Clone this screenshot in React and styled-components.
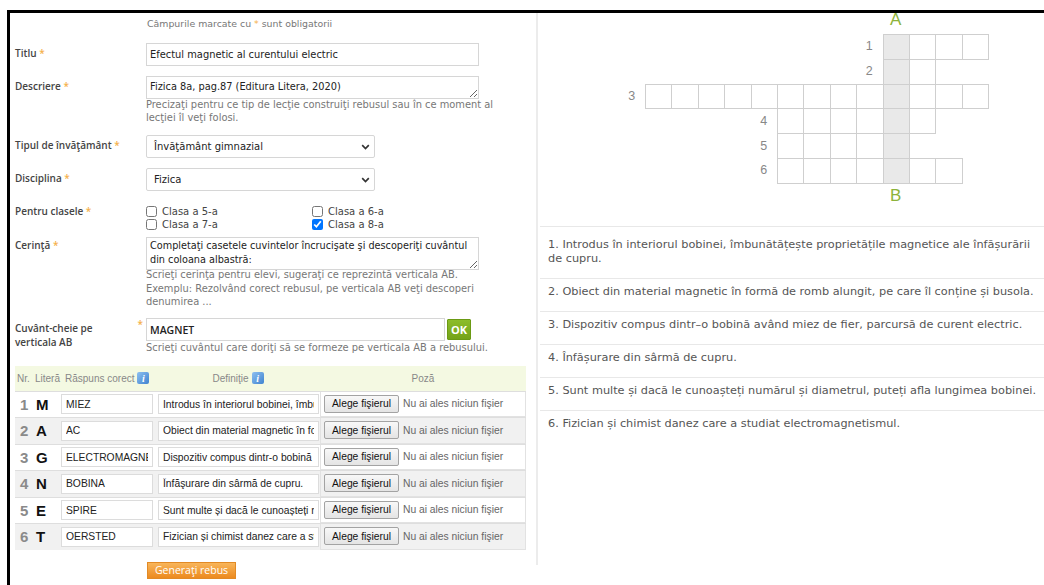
import React from 'react';
import styled, {createGlobalStyle} from 'styled-components';

const GlobalStyle = createGlobalStyle`
  html, body {
    margin: 0;
    padding: 0;
    background: #fff;
  }
  body {
    font-family: "DejaVu Sans", "Open Sans", sans-serif;
    color: #444;
  }
`;

const Frame = styled.div`
  display: flex;
  margin: 10px 0 0 7px;
  height: 575px;
  box-sizing: border-box;
  border-top: 3px solid #000;
  border-left: 3px solid #000;
`;

/* ---------- left: the form ---------- */

const FormPanel = styled.div`
  flex: none;
  width: 526px;
  box-sizing: border-box;
  padding: 3.5px 10px 0 5px;
`;

const Note = styled.div`
  margin-left: 132px;
  font-size: 9.4px;
  line-height: 13px;
  color: #777;
`;

const Star = styled.span`
  color: #f5b04a;
`;

const FieldRow = styled.div`
  display: grid;
  grid-template-columns: 131px 1fr;
  margin-top: ${({$gap}) => $gap}px;
`;

const Label = styled.div`
  padding-top: ${({$pad}) => ($pad === undefined ? 3.5 : $pad)}px;
  font-family: "Open Sans", sans-serif;
  font-size: 10px;
  line-height: 13px;
  font-weight: 600;
  color: #444;
  white-space: nowrap;
`;

const SplitLabel = styled(Label)`
  display: flex;
  justify-content: space-between;
  align-items: flex-start;
  padding-right: 3px;
  line-height: 14px;
  white-space: normal;

  ${Star} {
    margin-top: -4px;
  }
`;

const Field = styled.div`
  display: flex;
  flex-direction: column;
  align-items: flex-start;
`;

const TextInput = styled.input`
  width: ${({$w}) => $w || 333}px;
  height: 23px;
  box-sizing: border-box;
  margin: 0;
  padding: 0 3px;
  border: 1px solid #d6d6d6;
  font-family: ${({$bold}) => ($bold ? '"Open Sans", sans-serif' : 'inherit')};
  font-size: ${({$bold}) => ($bold ? 10.5 : 9.9)}px;
  font-weight: ${({$bold}) => ($bold ? 600 : 400)};
  color: #222;
  outline: none;
`;

const TextArea = styled.textarea`
  display: block;
  width: 333px;
  height: ${({$h}) => $h}px;
  box-sizing: border-box;
  margin: 0;
  padding: ${({$pt}) => $pt}px 4px 0 3px;
  border: 1px solid #d6d6d6;
  font-family: inherit;
  font-size: ${({$size}) => $size || 9.8}px;
  line-height: 14px;
  color: #222;
  overflow: hidden;
  resize: vertical;
  outline: none;
`;

const Help = styled.div`
  margin-top: ${({$mt}) => $mt || 0}px;
  font-size: 9.9px;
  line-height: ${({$lh}) => $lh || 13}px;
  color: #777;
  white-space: nowrap;
`;

const SelectBox = styled.div`
  display: flex;
  align-items: center;
  justify-content: space-between;
  width: 229px;
  height: 23px;
  box-sizing: border-box;
  padding: 0 4px 0 7px;
  border: 1px solid #d6d6d6;
  border-radius: 2px;
  font-size: 10px;
  color: #222;
`;

const Checks = styled.div`
  display: grid;
  grid-template-columns: 166px 166px;
`;

const CheckItem = styled.label`
  display: flex;
  align-items: center;
  gap: 5px;
  font-size: 10px;
  line-height: 13px;
  color: #444;

  input {
    width: 11px;
    height: 11px;
    margin: 0;
  }
`;

const KeyLine = styled.div`
  display: flex;
  align-items: center;
  gap: 2px;
`;

const OkButton = styled.button`
  width: 24px;
  height: 21px;
  padding: 0;
  border: 1px solid #6b9a14;
  border-radius: 1px;
  background: linear-gradient(#8cbd2a, #74a318);
  color: #fff;
  font-family: "Open Sans", sans-serif;
  font-size: 11px;
  font-weight: 700;
`;

/* ---------- table of answers ---------- */

const Table = styled.div`
  margin-top: 11.5px;
  font-family: "Liberation Sans", Arial, sans-serif;
`;

const cols = '18px 25px 98px 164px 1fr';

const HeadRow = styled.div`
  display: grid;
  grid-template-columns: ${cols};
  align-items: center;
  height: 25px;
  background: #f4f9e2;
  font-size: 10px;
  color: #888;
  white-space: nowrap;
`;

const HeadCell = styled.div`
  display: flex;
  align-items: center;
  gap: 3px;
  justify-content: ${({$center}) => ($center ? 'center' : 'flex-start')};
  padding-left: ${({$pl}) => $pl || 0}px;
`;

const InfoIcon = styled.span`
  display: inline-flex;
  align-items: center;
  justify-content: center;
  width: 12px;
  height: 12px;
  border-radius: 2px;
  background: linear-gradient(135deg, #8ec0f0, #3f83d0);
  color: #fff;
  font-family: "Liberation Serif", serif;
  font-style: italic;
  font-weight: 700;
  font-size: 10px;
`;

const Row = styled.div`
  display: grid;
  grid-template-columns: ${cols};
  align-items: center;
  height: 26.5px;
  box-sizing: border-box;
  border-top: 1px solid #dedede;
  background: ${({$shade}) => ($shade ? '#f1f1f1' : '#fff')};
`;

const Num = styled.div`
  padding-left: 5px;
  font-size: 15px;
  font-weight: 700;
  color: #8a8a8a;
`;

const Letter = styled.div`
  padding-left: 3px;
  font-size: 15px;
  font-weight: 700;
  color: #111;
`;

const CellInput = styled.input`
  width: ${({$w}) => $w}px;
  height: 20px;
  box-sizing: border-box;
  margin: 0 0 0 ${({$ml}) => $ml}px;
  padding: 0 4px;
  border: 1px solid #dcdcdc;
  background: #fff;
  font-family: inherit;
  font-size: 10.3px;
  color: #222;
  outline: none;
`;

const FileCell = styled.div`
  display: flex;
  align-items: center;
  gap: 4px;
  height: 100%;
  box-sizing: border-box;
  padding: 0 3px;
  border: 1px solid #e2e2e2;
  border-top: none;
  font-size: 10.3px;
  color: #666;
  white-space: nowrap;
`;

const FileButton = styled.button`
  height: 18px;
  padding: 0 7px;
  border: 1px solid #a3a3a3;
  border-radius: 2px;
  background: linear-gradient(#f8f8f8, #e4e4e4);
  font-family: inherit;
  font-size: 10.3px;
  color: #111;
`;

const SubmitButton = styled.button`
  display: block;
  margin: 12px 0 0 132px;
  width: 89px;
  height: 17px;
  padding: 0;
  border: 1px solid #e28a25;
  background: linear-gradient(#f8b55a, #ec8a1f);
  color: #fff;
  font-family: "Open Sans", sans-serif;
  font-size: 10.5px;
`;

/* ---------- right: puzzle and clues ---------- */

const PuzzlePanel = styled.div`
  flex: 1;
  align-self: flex-start;
  height: 552px;
  border-left: 2px solid #ececec;
`;

const Grid = styled.div`
  display: grid;
  grid-template-columns: repeat(14, 26.4px);
  grid-template-rows: 21px repeat(6, 24.8px) 22px;
  margin-left: 80.6px;
  font-family: "Liberation Sans", Arial, sans-serif;
`;

const Box = styled.div`
  grid-row: ${({$row}) => $row};
  grid-column: ${({$col}) => $col};
  margin: 0 -1px -1px 0;
  border: 1px solid #cfcfcf;
  background: ${({$key}) => ($key ? '#e9e9e9' : '#fff')};
`;

const RowNum = styled.div`
  grid-row: ${({$row}) => $row};
  grid-column: ${({$col}) => $col};
  display: flex;
  align-items: center;
  justify-content: center;
  font-size: 12.5px;
  color: #888;
`;

const KeyMark = styled.div`
  grid-row: ${({$row}) => $row};
  grid-column: ${({$col}) => $col};
  text-align: center;
  font-size: 17px;
  line-height: 17px;
  margin-top: ${({$top}) => $top}px;
  color: #8db33a;
`;

const Clues = styled.ol`
  list-style: none;
  margin: 21px 0 0 2px;
  padding: 5px 0 0;
  border-top: 1px solid #e8e8e8;
`;

const Clue = styled.li`
  padding: 6px 0 12px 8px;
  border-bottom: 1px solid #e8e8e8;
  font-size: 11.3px;
  line-height: 14px;
  color: #555;

  &:last-child {
    border-bottom: none;
  }
`;

const Chevron = () => (
  <svg width="9" height="6" viewBox="0 0 9 6">
    <path d="M1.2 1.2 4.5 4.5 7.8 1.2" fill="none" stroke="#333" strokeWidth="1.7" />
  </svg>
);

const answers = [
  {letter: 'M', word: 'MIEZ', def: 'Introdus în interiorul bobinei, îmbunătăţeşte proprietăţile magnetice ale înfăşurării de cupru.'},
  {letter: 'A', word: 'AC', def: 'Obiect din material magnetic în formă de romb alungit, pe care îl conține și busola.'},
  {letter: 'G', word: 'ELECTROMAGNET', def: 'Dispozitiv compus dintr-o bobină având miez de fier, parcursă de curent electric.'},
  {letter: 'N', word: 'BOBINA', def: 'Înfăşurare din sârmă de cupru.'},
  {letter: 'E', word: 'SPIRE', def: 'Sunt multe și dacă le cunoașteți numărul și diametrul, puteți afla lungimea bobinei.'},
  {letter: 'T', word: 'OERSTED', def: 'Fizician și chimist danez care a studiat electromagnetismul.'},
];

const clues = [
  'Introdus în interiorul bobinei, îmbunătățește proprietățile magnetice ale înfășurării de cupru.',
  'Obiect din material magnetic în formă de romb alungit, pe care îl conține și busola.',
  'Dispozitiv compus dintr–o bobină având miez de fier, parcursă de curent electric.',
  'Înfășurare din sârmă de cupru.',
  'Sunt multe și dacă le cunoașteți numărul și diametrul, puteți afla lungimea bobinei.',
  'Fizician și chimist danez care a studiat electromagnetismul.',
];

// start column of each word, counted from the left of the longest row
const layout = [
  {start: 9, len: 4},
  {start: 9, len: 2},
  {start: 0, len: 13},
  {start: 5, len: 6},
  {start: 5, len: 5},
  {start: 5, len: 7},
];
const KEY_COL = 9;

const Puzzle = () => (
  <Grid>
    <KeyMark $row={1} $col={KEY_COL + 2} $top={-2}>A</KeyMark>
    {layout.map((w, i) => (
      <React.Fragment key={i}>
        <RowNum $row={i + 2} $col={w.start + 1}>{i + 1}</RowNum>
        {Array.from({length: w.len}, (_, k) => {
          const c = w.start + k;
          return <Box key={k} $row={i + 2} $col={c + 2} $key={c === KEY_COL} />;
        })}
      </React.Fragment>
    ))}
    <KeyMark $row={8} $col={KEY_COL + 2} $top={4}>B</KeyMark>
  </Grid>
);

export default function App() {
  return (
    <>
      <GlobalStyle />
      <Frame>
        <FormPanel>
          <Note>Câmpurile marcate cu <Star>*</Star> sunt obligatorii</Note>

          <FieldRow $gap={13.5}>
            <Label>Titlu <Star>*</Star></Label>
            <Field>
              <TextInput readOnly value="Efectul magnetic al curentului electric" />
            </Field>
          </FieldRow>

          <FieldRow $gap={10}>
            <Label>Descriere <Star>*</Star></Label>
            <Field>
              <TextArea readOnly $h={23} $pt={3} value="Fizica 8a, pag.87 (Editura Litera, 2020)" />
              <Help $mt={-1}>
                Precizaţi pentru ce tip de lecţie construiţi rebusul sau în ce moment al<br />
                lecţiei îl veţi folosi.
              </Help>
            </Field>
          </FieldRow>

          <FieldRow $gap={11}>
            <Label>Tipul de învăţământ <Star>*</Star></Label>
            <Field>
              <SelectBox>Învăţământ gimnazial<Chevron /></SelectBox>
            </Field>
          </FieldRow>

          <FieldRow $gap={10}>
            <Label>Disciplina <Star>*</Star></Label>
            <Field>
              <SelectBox>Fizica<Chevron /></SelectBox>
            </Field>
          </FieldRow>

          <FieldRow $gap={13.5}>
            <Label $pad={0}>Pentru clasele <Star>*</Star></Label>
            <Checks>
              <CheckItem><input type="checkbox" readOnly />Clasa a 5-a</CheckItem>
              <CheckItem><input type="checkbox" readOnly />Clasa a 6-a</CheckItem>
              <CheckItem><input type="checkbox" readOnly />Clasa a 7-a</CheckItem>
              <CheckItem><input type="checkbox" readOnly checked />Clasa a 8-a</CheckItem>
            </Checks>
          </FieldRow>

          <FieldRow $gap={6.5}>
            <Label $pad={2}>Cerinţă <Star>*</Star></Label>
            <Field>
              <TextArea
                readOnly
                $h={33}
                $pt={1}
                $size={9.7}
                value="Completaţi casetele cuvintelor încrucişate şi descoperiţi cuvântul din coloana albastră:"
              />
              <Help $mt={-2} $lh={13.5}>
                Scrieţi cerinţa pentru elevi, sugeraţi ce reprezintă verticala AB.<br />
                Exemplu: Rezolvând corect rebusul, pe verticala AB veţi descoperi<br />
                denumirea ...
              </Help>
            </Field>
          </FieldRow>

          <FieldRow $gap={9.5}>
            <SplitLabel $pad={3}>
              <span>Cuvânt-cheie pe<br />verticala AB</span>
              <Star>*</Star>
            </SplitLabel>
            <Field>
              <KeyLine>
                <TextInput readOnly $w={299} $bold value="MAGNET" />
                <OkButton>OK</OkButton>
              </KeyLine>
              <Help>Scrieţi cuvântul care doriţi să se formeze pe verticala AB a rebusului.</Help>
            </Field>
          </FieldRow>

          <Table>
            <HeadRow>
              <HeadCell $pl={2}>Nr.</HeadCell>
              <HeadCell $pl={2}>Literă</HeadCell>
              <HeadCell $pl={7}>Răspuns corect <InfoIcon>i</InfoIcon></HeadCell>
              <HeadCell $center>Definiţie <InfoIcon>i</InfoIcon></HeadCell>
              <HeadCell $center>Poză</HeadCell>
            </HeadRow>
            {answers.map((a, i) => (
              <Row key={a.word} $shade={i % 2 === 1}>
                <Num>{i + 1}</Num>
                <Letter>{a.letter}</Letter>
                <CellInput readOnly $w={92} $ml={3} value={a.word} />
                <CellInput readOnly $w={161} $ml={2} value={a.def} />
                <FileCell>
                  <FileButton>Alege fişierul</FileButton>
                  Nu ai ales niciun fişier
                </FileCell>
              </Row>
            ))}
          </Table>

          <SubmitButton>Generaţi rebus</SubmitButton>
        </FormPanel>

        <PuzzlePanel>
          <Puzzle />
          <Clues>
            {clues.map((c, i) => (
              <Clue key={i}>{i + 1}. {c}</Clue>
            ))}
          </Clues>
        </PuzzlePanel>
      </Frame>
    </>
  );
}
